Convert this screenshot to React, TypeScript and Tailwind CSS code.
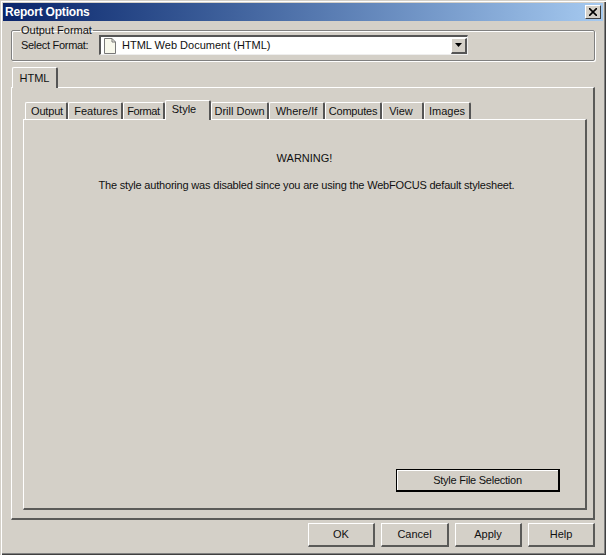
import React from 'react'

const tabs = [
  { label: 'Output', w: 'w-[43px]', extra: 'pl-[2px] tracking-[-0.2px]' },
  { label: 'Features', w: 'w-[55px]', extra: 'pl-[2px]' },
  { label: 'Format', w: 'w-[42px]', extra: 'tracking-[-0.4px]' },
  { label: 'Style', w: 'w-[46px]', extra: 'pr-[7px]', active: true },
  { label: 'Drill Down', w: 'w-[58px]', extra: '' },
  { label: 'Where/If', w: 'w-[56px]', extra: '' },
  { label: 'Computes', w: 'w-[57px]', extra: 'tracking-[-0.2px]' },
  { label: 'View', w: 'w-[42px]', extra: 'pr-[3px]' },
  { label: 'Images', w: 'w-[47px]', extra: '' },
]

const FooterButton = ({ label, width }: { label: string; width: string }) => (
  <button className={`${width} h-[24px] bg-[#d4d0c8] border-t border-l border-t-white border-l-white border-r-2 border-b-2 border-r-[#5a5a58] border-b-[#5a5a58] text-[11px] text-[#111]`}>
    {label}
  </button>
)

const App: React.FC = () => {
  return (
    <div className="w-[606px] h-[555px] bg-[#d4d0c8] pt-[3px] px-[3px] flex flex-col overflow-hidden text-[11px] text-[#111] font-['Liberation_Sans',Arial,sans-serif] shadow-[inset_1px_1px_0_#d4d0c8,inset_2px_2px_0_#fff,inset_-1px_-1px_0_#404040,inset_-2px_-2px_0_#808080]">
      {/* Title bar */}
      <div className="h-[18px] shrink-0 flex items-center justify-between pl-[2px] pr-[2px] bg-gradient-to-r from-[#0a246a] to-[#a6caf0]">
        <span className="text-white font-bold text-[12px] tracking-[-0.2px]">Report Options</span>
        <button className="w-[16px] h-[14px] flex items-center justify-center bg-[#d4d0c8] border-t border-l border-t-white border-l-white border-r border-b border-r-[#404040] border-b-[#404040]">
          <svg width="8" height="8" viewBox="0 0 8 8">
            <path d="M0 0L8 8M8 0L0 8" stroke="#000" strokeWidth="1.6" />
          </svg>
        </button>
      </div>

      <div className="flex flex-col px-[8px]">
        {/* Output Format group */}
        <fieldset className="mt-[3px] h-[37px] border border-[#808080] shadow-[1px_1px_0_#fff,inset_1px_1px_0_#fff] flex items-center pl-[9px] w-[584px] rounded-[2px]">
          <legend className="-ml-[1px] px-[1px] leading-[12px] text-[11px]">Output Format</legend>
          <div className="flex items-center -mt-[1px]">
            <span className="w-[78px] tracking-[-0.3px]">Select Format:</span>
            <div className="w-[369px] h-[20px] bg-white border-t-2 border-l-2 border-t-[#555] border-l-[#555] border-r border-b border-r-[#eee] border-b-[#eee] flex items-center">
              <svg width="14" height="16" viewBox="0 0 14 16" className="ml-[2px] shrink-0">
                <path d="M1.5 .5H9L12.5 4V15.5H1.5Z" fill="#f8f8ec" stroke="#777" />
                <path d="M9 .5V4H12.5" fill="none" stroke="#777" />
              </svg>
              <span className="ml-[5px] flex-1">HTML Web Document (HTML)</span>
              <div className="w-[16px] h-[16px] flex items-center justify-center bg-[#d4d0c8] border-t border-l border-t-white border-l-white border-r-2 border-b-2 border-r-[#555] border-b-[#555]">
                <svg width="7" height="4" viewBox="0 0 7 4"><path d="M0 0H7L3.5 4Z" fill="#000" /></svg>
              </div>
            </div>
          </div>
        </fieldset>

        {/* Outer tab */}
        <div className="mt-[6px] h-[20px] flex items-end pl-[1px]">
          <div className="relative z-10 w-[46px] h-[21px] -mb-[1px] bg-[#d4d0c8] border-t border-l border-t-white border-l-white border-r-2 border-r-[#555] rounded-t-[2px] flex items-center justify-center">
            HTML
          </div>
        </div>

        {/* Outer panel */}
        <div className="w-[584px] h-[433px] border-t border-l border-t-white border-l-white border-r-2 border-b-2 border-r-[#5a5a58] border-b-[#5a5a58] pl-[11px] pt-[13px] flex flex-col">
          <div className="flex items-end h-[18px] pl-[2px]">
            {tabs.map((tab) => (
              <div
                key={tab.label}
                className={`${tab.w} ${tab.extra} relative flex justify-center bg-[#d4d0c8] border-t border-l border-t-white border-l-white border-r-2 border-r-[#555] rounded-t-[2px] ${
                  tab.active ? 'z-10 h-[20px] -mb-[1px] items-start' : 'h-[17px] items-center'
                }`}
              >
                {tab.label}
              </div>
            ))}
          </div>
          <div className="w-[564px] h-[391px] border-t border-l border-t-white border-l-white border-r-2 border-b-2 border-r-[#5a5a58] border-b-[#5a5a58] flex flex-col items-center">
            <div className="mt-[31px] leading-[14px]">WARNING!</div>
            <div className="mt-[13px] ml-[4px] leading-[14px] tracking-[-0.19px]">
              The style authoring was disabled since you are using the WebFOCUS default stylesheet.
            </div>
            <div className="mt-auto mb-[16px] w-full flex justify-end pr-[25px]">
              <button className="w-[164px] h-[23px] bg-[#d4d0c8] border border-black border-r-2 border-b-2 shadow-[inset_1px_1px_0_#fff] text-[11px] tracking-[-0.25px]">
                Style File Selection
              </button>
            </div>
          </div>
        </div>

        {/* Footer */}
        <div className="mt-[3px] w-[584px] flex justify-end gap-[6px]">
          <FooterButton label="OK" width="w-[67px]" />
          <FooterButton label="Cancel" width="w-[68px]" />
          <FooterButton label="Apply" width="w-[67px]" />
          <FooterButton label="Help" width="w-[67px]" />
        </div>
      </div>
    </div>
  )
}

export default App
